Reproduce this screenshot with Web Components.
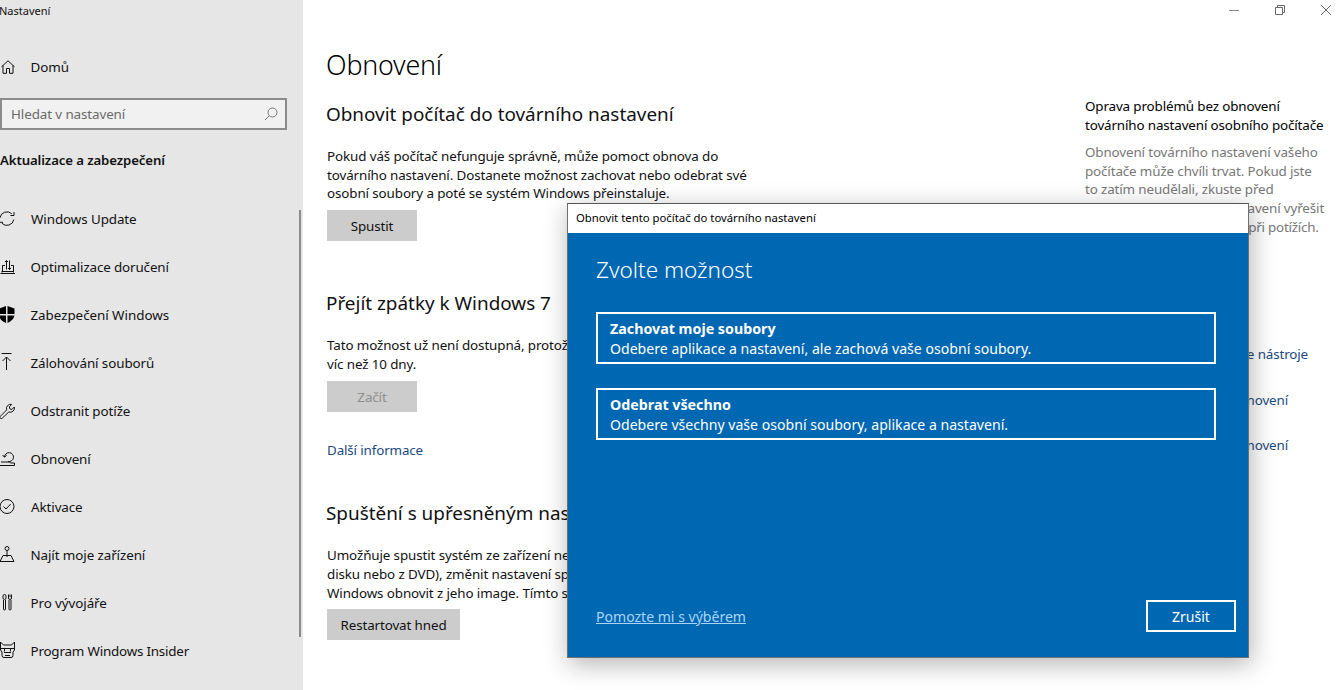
<!DOCTYPE html>
<html lang="cs"><head><meta charset="utf-8"><title>Nastavení</title>
<style>
html,body{margin:0;height:100%;overflow:hidden;background:#fff}
body{font-family:"Noto Sans","Open Sans",sans-serif;font-size:13.4px;color:#000}
</style></head><body>
<settings-app>
<side-bar slot="side"></side-bar>
<main-pane slot="main"></main-pane>
</settings-app>
<window-controls></window-controls>
<reset-dialog></reset-dialog>
<script>
const ICONS={
home:'<path d="M1.500 7.800 8 1.800l6.500 6M3 6.500v7.800h3.500V9.500h3v4.800H13V6.500"/>',
update:'<path d="M11.800 2.800A7 7 0 0 0 0 6.800M14 1v3.500h-3.500M1.800 12.200A7 7 0 0 0 13.800 8.500M-.500 14.800v-3.500h3.500"/>',
delivery:'<path d="M.5 14.500h14.500M2 14.500v-1M13.500 14.500v-1M1.500 12.500h12.500M2.500 12.500V6.500h2.500M13.500 12.500V6.500h-2.500M6.500 10.500V1.500M5 3l1.500-1.500L8 3M9.500 1.500v9M8 9l1.500 1.500L11 9"/>',
shield:'<path fill="#000" stroke="none" d="M6-1-1 1.500v5.500h7V-1Zm1.500 0v8H14.500V1.500L7.500-1ZM-1 8.500c.5 3.200 3 5.700 7 7.500V8.500H-1Zm8.500 0V16c4-1.800 6.500-4.300 7-7.500h-7Z"/>',
backup:'<path d="M1.500-1.500h10M6.500 15V2M2.500 6l4-4 4 4"/>',
wrench:'<path d="M.3 13.300 6.700 6.900a4.200 4.200 0 0 1 5-5.500L9.300 3.900l.6 2 2 .6 2.400-2.500a4.200 4.200 0 0 1-5.500 5L2.200 15.200a1.300 1.300 0 0 1-1.900-1.900Z"/>',
restore:'<path d="M4.500 6a4.500 4.500 0 1 1 3.500 4.500M2.500 4l2 2.200 2.200-2M-.5 14.500h15V12H10.500L9.500 11H1"/>',
check:'<circle cx="7" cy="7.500" r="7"/><path d="m3.500 7.500 2.500 2.500 4.700-5"/>',
find:'<circle cx="7" cy="1.500" r="2"/><path d="M7 3.500V10M0 14.500h14M0 14.500 3 8.500h8l3 6"/>',
dev:'<path d="M3 1a1.500 1.500 0 0 1 3 0v2a1.500 1.500 0 0 1-3 0ZM3.500 5v9a1 1 0 0 0 2 0V5M8.500-.5V3a1.500 1.500 0 0 0 3 0V-.5M10-.5V2M9 5v9a1 1 0 0 0 2 0V5"/>',
insider:'<path d="M.5-1 3.500 2h8l3-3v8l-1.500 2v3.500a2 2 0 0 1-2 2h-7a2 2 0 0 1-2-2V9L.5 7ZM.5 5.500h14M4.500 5.500v3M10.500 5.500v3M4 9.500h7M5 12.500h5"/>'
};
const ic=n=>`<svg viewBox="0 0 16 16" width="16" height="16" fill="none" stroke="#111" stroke-width="1">${ICONS[n]}</svg>`;

customElements.define('settings-app',class extends HTMLElement{constructor(){super();this.attachShadow({mode:'open'}).innerHTML=`
<style>:host{display:grid;grid-template-columns:303px 1fr;height:690px}
</style><slot name="side"></slot><slot name="main"></slot>`}});

customElements.define('nav-item',class extends HTMLElement{constructor(){super();this.attachShadow({mode:'open'}).innerHTML=`
<style>:host{display:flex;align-items:center;height:48px;gap:14.500px;white-space:nowrap;font-size:13.400px;letter-spacing:-.09px;color:#111}
svg{flex:none;display:block;overflow:visible}</style>${ic(this.getAttribute('icon'))}<slot></slot>`}});

customElements.define('side-bar',class extends HTMLElement{constructor(){super();this.attachShadow({mode:'open'}).innerHTML=`
<style>:host{display:block;background:#e6e6e6;height:690px;position:relative;overflow:hidden}
.t{font-size:11px;height:20px;line-height:21px;margin-left:-1px;color:#111}
.home{margin-top:23px}
.search{box-sizing:border-box;height:32px;margin:7px 16px 0 0;border:2px solid #8c8c8c;background:#f1f1f1;display:flex;align-items:center;justify-content:space-between;padding:0 7px 1px 9px;color:#6a6a6a;font-size:13.400px;letter-spacing:-.1px}
.h{font-weight:600;font-size:13.200px;margin-top:19px;height:22px;line-height:22px;color:#111;letter-spacing:-.1px}
.list{margin-top:24px}
.bar{position:absolute;left:299px;top:210px;width:2px;height:427px;background:#8a8a8a}
</style>
<div class="t">Nastavení</div>
<nav-item class="home" icon="home">Domů</nav-item>
<div class="search"><span>Hledat v nastavení</span><svg viewBox="0 0 14 14" width="14" height="14" fill="none" stroke="#777"><circle cx="8.500" cy="5.500" r="4.500"/><path d="M5.200 8.800 1 13"/></svg></div>
<div class="h">Aktualizace a zabezpečení</div>
<div class="list">
<nav-item icon="update" style="gap:15px">Windows Update</nav-item>
<nav-item icon="delivery" style="letter-spacing:-.13px">Optimalizace doručení</nav-item>
<nav-item icon="shield" style="letter-spacing:-.04px">Zabezpečení Windows</nav-item>
<nav-item icon="backup">Zálohování souborů</nav-item>
<nav-item icon="wrench">Odstranit potíže</nav-item>
<nav-item icon="restore">Obnovení</nav-item>
<nav-item icon="check" style="gap:15px">Aktivace</nav-item>
<nav-item icon="find">Najít moje zařízení</nav-item>
<nav-item icon="dev">Pro vývojáře</nav-item>
<nav-item icon="insider" style="letter-spacing:-.2px">Program Windows Insider</nav-item>
</div>
<div class="bar"></div>`}});

customElements.define('plain-button',class extends HTMLElement{constructor(){super();this.attachShadow({mode:'open'}).innerHTML=`
<style>:host{display:flex;align-items:center;justify-content:center;box-sizing:border-box;height:31px;width:90px;background:#ccc;color:#111;font-size:13.400px}
:host([disabled]){color:#8f8f8f}</style><slot></slot>`}});

customElements.define('main-pane',class extends HTMLElement{constructor(){super();this.attachShadow({mode:'open'}).innerHTML=`
<style>:host{display:flex;height:690px;overflow:hidden;padding-left:23px;background:#fff;letter-spacing:-.11px}
.c{width:759px;flex:none}
h1{font:300 26.800px/36px "Noto Sans",sans-serif;margin:47px 0 0;color:#000;letter-spacing:-.2px}
h2{font:400 18.900px/26px "Noto Sans",sans-serif;margin:0;color:#111;white-space:nowrap;letter-spacing:0}
p{margin:0;line-height:18.700px;font-size:13.400px;color:#111;padding-left:1px;white-space:nowrap}
.b{margin-left:1px}
a{color:#1a4a80;font-size:13.400px;text-decoration:none;padding-left:1px}
.r{flex:none;width:250px;margin-top:97px;font-size:13.400px;line-height:19px;letter-spacing:-.13px}
.g{color:#777;margin-top:8px;line-height:18.700px;white-space:nowrap}
.tight{letter-spacing:-.23px}
.l{display:block;color:#1a4a80;white-space:nowrap;text-align:right;padding:0;line-height:19px}
</style>
<div class="c">
<h1>Obnovení</h1>
<h2 style="margin-top:18px">Obnovit počítač do továrního nastavení</h2>
<p style="margin-top:20px">Pokud váš počítač nefunguje správně, může pomoct obnova do<br>továrního nastavení. Dostanete možnost zachovat nebo odebrat své<br>osobní soubory a poté se systém Windows přeinstaluje.</p>
<plain-button class="b" style="margin-top:7px">Spustit</plain-button>
<h2 style="margin-top:49px">Přejít zpátky k Windows 7</h2>
<p style="margin-top:20px">Tato možnost už není dostupná, protože<br>víc než 10 dny.</p>
<plain-button class="b" disabled style="margin-top:7.600px">Začít</plain-button>
<div style="margin-top:29px;height:20px;letter-spacing:-.14px"><a>Další informace</a></div>
<h2 style="margin-top:39px">Spuštění s upřesněným nastavením</h2>
<p style="margin-top:20px">Umožňuje spustit systém ze zařízení nebo<br>disku nebo z DVD), změnit nastavení spouštění<br>Windows obnovit z jeho image. Tímto se</p>
<plain-button class="b" style="margin-top:7px;width:133px">Restartovat hned</plain-button>
</div>
<div class="r">
<div>Oprava problémů bez obnovení<br>továrního nastavení osobního počítače</div>
<div class="g">Obnovení továrního nastavení vašeho<br>počítače může chvíli trvat. Pokud jste<br>to zatím neudělali, zkuste před<br>obnovením továrního nastavení vyřešit<br><span class="tight">problémy pomocí poradce při potížích.</span></div>
<a class="l" style="margin-top:108px;width:223px">Použijte nástroje</a>
<a class="l" style="margin-top:27px;width:203px">Možnosti obnovení</a>
<a class="l" style="margin-top:26px;width:203px">Možnosti obnovení</a>
</div>`}});

customElements.define('window-controls',class extends HTMLElement{constructor(){super();this.attachShadow({mode:'open'}).innerHTML=`
<style>:host{position:absolute;top:5px;left:1229px;display:flex;gap:36px}
svg{display:block}</style>
<svg width="10" height="10" fill="none" stroke="#888"><path d="M0 5.500h10"/></svg>
<svg width="10" height="10" fill="none" stroke="#666"><path d="M.5 2.500h7v7h-7zM2.500 2.500v-2h7v7h-2"/></svg>
<svg width="10" height="10" fill="none" stroke="#666"><path d="m0 0 10 10M10 0 0 10"/></svg>`}});

customElements.define('choice-box',class extends HTMLElement{constructor(){super();this.attachShadow({mode:'open'}).innerHTML=`
<style>:host{display:block;box-sizing:border-box;height:52px;border:2px solid #fff;padding:5px 12px;color:#fff;line-height:20px;font-size:14.100px}
b{display:block;font-weight:700;font-size:14.250px}</style>
<b>${this.getAttribute('heading')}</b><slot></slot>`}});

customElements.define('reset-dialog',class extends HTMLElement{constructor(){super();this.attachShadow({mode:'open'}).innerHTML=`
<style>:host{position:absolute;left:567px;top:203px;width:682px;height:455px;box-sizing:border-box;border:1px solid #6f6f6f;border-top-color:#555;display:flex;flex-direction:column;background:#0067b3;color:#fff;box-shadow:2px 6px 24px rgba(0,0,0,.3)}
.tb{height:29px;flex:none;background:#fff;color:#000;font-size:11.330px;line-height:27px;padding-left:8px}
.bd{flex:1;display:flex;flex-direction:column;padding:21px 12px 25px 28px}
.w{padding-right:20px}
h3{font:300 22.500px/32px "Noto Sans",sans-serif;margin:0 0 26px}
choice-box+choice-box{margin-top:24px}
.f{margin-top:auto;display:flex;justify-content:space-between;align-items:center}
a{color:#a8d4f7;text-decoration:underline;font-size:14.050px}
.x{box-sizing:border-box;width:90px;height:32px;border:2px solid #fff;display:flex;align-items:center;justify-content:center;font-size:14px}
</style>
<div class="tb">Obnovit tento počítač do továrního nastavení</div>
<div class="bd">
<h3>Zvolte možnost</h3>
<div class="w">
<choice-box heading="Zachovat moje soubory">Odebere aplikace a nastavení, ale zachová vaše osobní soubory.</choice-box>
<choice-box heading="Odebrat všechno">Odebere všechny vaše osobní soubory, aplikace a nastavení.</choice-box>
</div>
<div class="f"><a>Pomozte mi s výběrem</a><div class="x">Zrušit</div></div>
</div>`}});
</script>
</body></html>
